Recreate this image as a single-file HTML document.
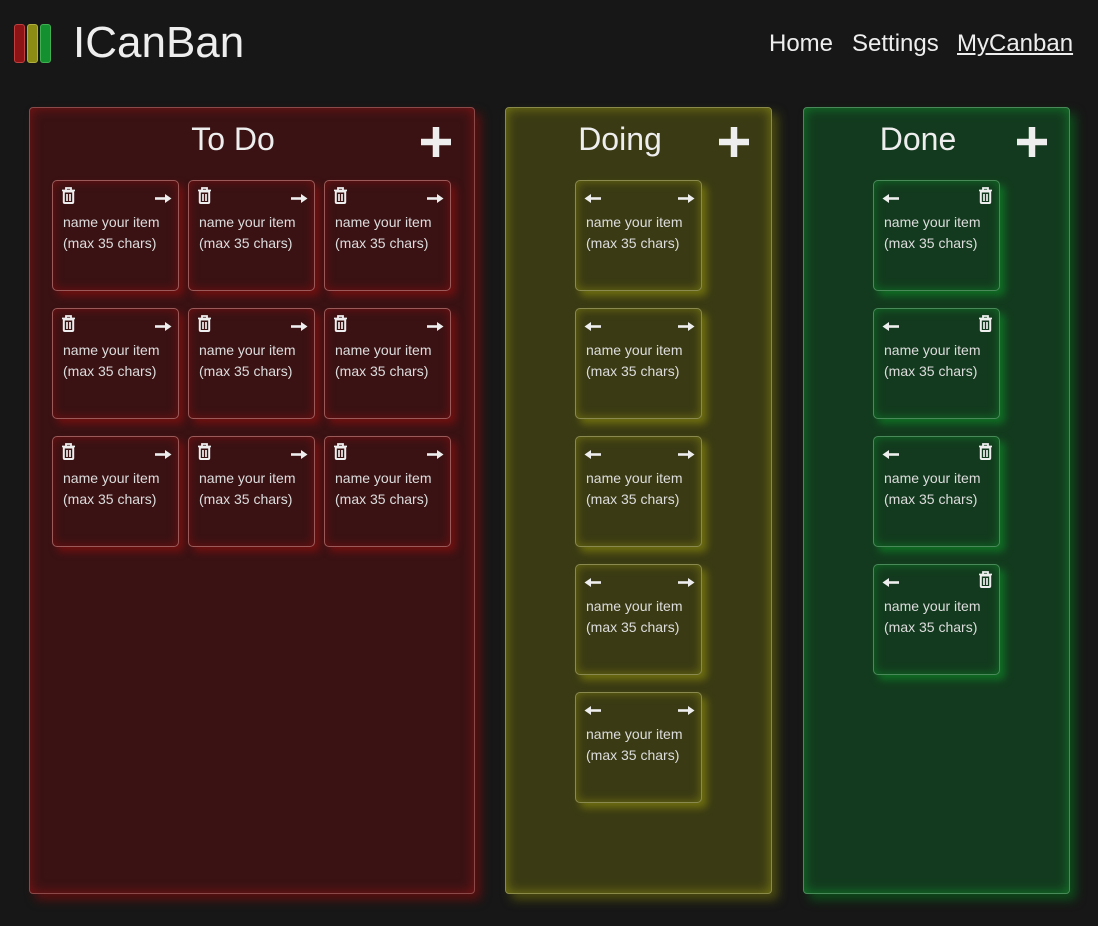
<!DOCTYPE html>
<html><head><meta charset="utf-8">
<style>
*{margin:0;padding:0;box-sizing:border-box}
body{width:1098px;height:926px;background:#171717;font-family:"Liberation Sans",sans-serif;color:#eee;position:relative;overflow:hidden}
.bar{position:absolute;top:24px;width:11px;height:39px;border-radius:3px}
.logo{position:absolute;left:73px;top:18px;font-size:44px;font-weight:300;color:#eee}
.nav{position:absolute;top:30px;font-size:24px;color:#eee}
.panel{position:absolute;top:107px;height:787px;border-radius:4px}
.title{position:absolute;top:121px;font-size:32px;color:#eee;text-align:center}
.plus{position:absolute;top:124px;width:32px;height:36px}
.card{position:absolute;width:127px;height:111px;border-radius:5px}
.t{position:absolute;left:10px;top:31px;font-size:14px;line-height:21px;color:#ddd;white-space:nowrap}
.ic{position:absolute}
</style></head><body>
<div class="bar" style="left:14px;background:#8c1414;border:1px solid #c04040"></div>
<div class="bar" style="left:27px;background:#8c8c14;border:1px solid #b0b040"></div>
<div class="bar" style="left:40px;background:#149030;border:1px solid #40b050"></div>
<div class="logo">ICanBan</div>
<div class="nav" style="left:769px">Home</div>
<div class="nav" style="left:852px">Settings</div>
<div class="nav" style="left:957px;text-decoration:underline">MyCanban</div>

<div class="panel" style="left:29px;width:446px;background:#3a1214;border:1px solid #8a4a4a;box-shadow:inset 0 0 12px #7a1414,6px 6px 10px #5a1010"></div>
<div class="panel" style="left:505px;width:267px;background:#3a3a14;border:1px solid #8a8a4a;box-shadow:inset 0 0 12px #7a7a14,6px 6px 10px #4a4a10"></div>
<div class="panel" style="left:803px;width:267px;background:#133a1e;border:1px solid #4a8a5a;box-shadow:inset 0 0 12px #147a2a,6px 6px 10px #0e4a1a"></div>

<div class="title" style="left:133px;width:200px">To Do</div>
<div class="title" style="left:520px;width:200px">Doing</div>
<div class="title" style="left:818px;width:200px">Done</div>
<svg class="plus" style="left:420px" viewBox="0 0 32 36"><path d="M16 3V33M1 18H31" stroke="#eee" stroke-width="6.5"/></svg>
<svg class="plus" style="left:718px" viewBox="0 0 32 36"><path d="M16 3V33M1 18H31" stroke="#eee" stroke-width="6.5"/></svg>
<svg class="plus" style="left:1016px" viewBox="0 0 32 36"><path d="M16 3V33M1 18H31" stroke="#eee" stroke-width="6.5"/></svg>

<div id="cards"></div>
<script>
var trash='<svg width="15" height="17" viewBox="0 0 15 17"><path d="M1 3.5H14M5 3V1H10V3" stroke="#eee" stroke-width="1.8" fill="none"/><rect x="2.8" y="4.5" width="9.4" height="11.5" rx="1" fill="none" stroke="#eee" stroke-width="2"/><path d="M6 7V14M9 7V14" stroke="#eee" stroke-width="1.7"/></svg>';
var ra='<svg width="17" height="11" viewBox="0 0 17 11"><path d="M0 5.5H12" stroke="#eee" stroke-width="2.6"/><path d="M10 1L16.5 5.5L10 10Z" fill="#eee"/></svg>';
var la='<svg width="17" height="11" viewBox="0 0 17 11"><path d="M5 5.5H17" stroke="#eee" stroke-width="2.6"/><path d="M7 1L0.5 5.5L7 10Z" fill="#eee"/></svg>';
var h='';
function card(x,y,bg,bd,sh,l,r){
h+='<div class="card" style="left:'+x+'px;top:'+y+'px;background:'+bg+';border:1px solid '+bd+';box-shadow:inset 0 0 10px '+sh+',5px 5px 8px '+sh+'">'+
'<div class="ic" style="left:8px;top:'+(l==trash?6:10)+'px">'+l+'</div><div class="ic" style="right:6px;top:'+(r==trash?6:10)+'px">'+r+'</div>'+
'<div class="t">name your item<br>(max 35 chars)</div></div>';}
[52,188,324].forEach(function(x){[180,308,436].forEach(function(y){card(x,y,'#3a1214','#9a5a5a','#701010',trash,ra);});});
[180,308,436,564,692].forEach(function(y){card(575,y,'#3a3a14','#8a8a50','#6e6e10',la,ra);});
[180,308,436,564].forEach(function(y){card(873,y,'#133a1e','#4a8a5a','#106e24',la,trash);});
document.getElementById('cards').innerHTML=h;
</script>
</body></html>
